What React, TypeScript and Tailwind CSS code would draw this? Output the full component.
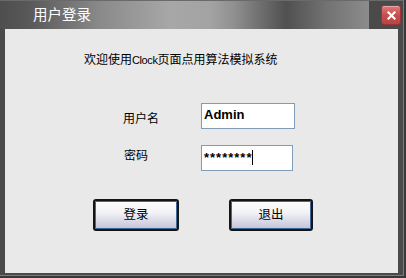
import React from "react";

export default function App() {
  return (
    <div className="w-[406px] h-[278px] bg-[#383838] font-['Liberation_Sans','Noto_Sans_CJK_SC',sans-serif]">
      <div className="w-[404px] h-[276px] bg-[#4a4a4a] border-r border-b border-[#7c7c7c] flex flex-col">
        <div className="h-[29px] flex border-t border-[#6a6a6a] bg-[linear-gradient(to_right,#4e4e4e_0%,#585858_7%,#8a8a8a_25%,#a7a7a7_42%,#a3a3a3_52%,#909090_58%,#727272_64%,#505050_71%,#727272_81%,#8c8c8c_91.5%,#4a4a4a_91.5%)]">
          <div className="flex-1 pl-[33px] pt-[3px] text-[14.5px] leading-[20px] text-white font-['Noto_Sans_CJK_SC',sans-serif]">
            用户登录
          </div>
          <div className="mt-[4px] mr-[2px] w-[20px] h-[20px] rounded-[3px] border border-[#9a3535] bg-[linear-gradient(to_bottom,#e07a7a,#c44c4c_55%,#b84444)] flex items-center justify-center shadow-[inset_0_1px_0_rgba(255,255,255,0.35)]">
            <svg width="9" height="9" viewBox="0 0 9 9">
              <path d="M1.5 1.5 L7.5 7.5 M7.5 1.5 L1.5 7.5" stroke="white" strokeWidth="2.2" strokeLinecap="square" />
            </svg>
          </div>
        </div>
        <div className="mx-[5px] h-[244px] bg-[#e9e9e9] flex flex-col text-black">
          <div className="pl-[79px] pt-[23px] text-[12px] leading-[16px] h-[39px]">
            欢迎使用<span className="font-['Liberation_Sans',sans-serif] text-[11px] tracking-[-0.4px]">Clock</span>页面点用算法模拟系统
          </div>
          <div className="mt-[35px] flex items-center pl-[118px]">
            <div className="w-[78px] text-[12px] leading-[16px] pt-[5px]">用户名</div>
            <div className="w-[94px] h-[26px] border border-[#7f9db9] bg-white flex items-center pl-[2px] pb-[2px] text-[13px] font-bold font-['Liberation_Sans',sans-serif]">
              Admin
            </div>
          </div>
          <div className="mt-[16px] flex items-center pl-[119px]">
            <div className="w-[77px] text-[12px] leading-[16px] pb-[4px]">密码</div>
            <div className="w-[92px] h-[26px] border border-[#7f9db9] bg-white flex items-center pl-[2px] pb-[2px]">
              <span className="text-[13px] font-bold leading-[15px] tracking-[1px] font-['Liberation_Sans',sans-serif]">********</span>
              <div className="w-px h-[15px] bg-black" />
            </div>
          </div>
          <div className="mt-[28px] flex pl-[88px] gap-[50px]">
            <div className="w-[86px] h-[32px] rounded-[3px] border-2 border-[#141414] bg-[linear-gradient(to_bottom,#ffffff,#f3f3f7_40%,#c3c3d7)] shadow-[inset_0_0_0_1px_#3d6a98] flex items-center justify-center text-[12.5px]">
              登录
            </div>
            <div className="w-[84px] h-[32px] rounded-[3px] border-2 border-[#141414] bg-[linear-gradient(to_bottom,#ffffff,#f3f3f7_40%,#c3c3d7)] shadow-[inset_0_0_0_1px_#3d6a98] flex items-center justify-center text-[12.5px]">
              退出
            </div>
          </div>
        </div>
      </div>
    </div>
  );
}
